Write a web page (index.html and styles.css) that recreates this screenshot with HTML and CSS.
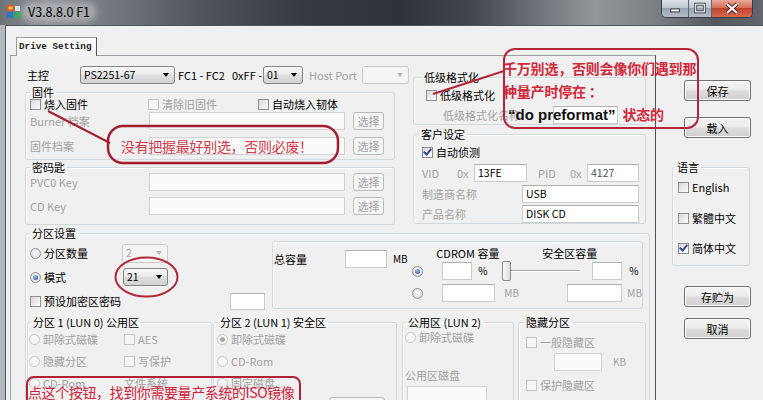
FILE: index.html
```html
<!DOCTYPE html>
<html lang="zh-CN">
<head>
  <meta charset="UTF-8">
  <title>V3.8.8.0 F1</title>
  <link rel="stylesheet" href="styles.css">
</head>
<body>
  <header class="win-top">
    <svg class="app-icon" viewBox="0 0 14 13">
      <rect x="0" y="0" width="7" height="6" fill="#e0572a"/>
      <rect x="1.5" y="1.5" width="4" height="3" fill="#f5c040"/>
      <rect x="8" y="1" width="5" height="5" fill="#d9dee5"/>
      <rect x="0" y="7" width="6" height="6" fill="#2d78cf"/>
      <rect x="7" y="7" width="7" height="6" fill="#3aa35a"/>
    </svg>
    <span class="title">V3.8.8.0 F1</span>
    <div class="caption">
      <span class="cap-btn cap-min"><svg viewBox="0 0 27 17"><rect x="9" y="9" width="9" height="3" fill="#fff" stroke="#33383f" stroke-width="1"/></svg></span>
      <span class="cap-btn cap-max"><svg viewBox="0 0 23 17"><rect x="7" y="4" width="9" height="8" fill="none" stroke="#33383f" stroke-width="3"/><rect x="7" y="4" width="9" height="8" fill="none" stroke="#fff" stroke-width="1.2"/></svg></span>
      <span class="cap-btn cap-close"><svg viewBox="0 0 40 17"><path d="M15 4 L25 13 M25 4 L15 13" stroke="#5a1a12" stroke-width="4"/><path d="M15 4 L25 13 M25 4 L15 13" stroke="#fff" stroke-width="2.2"/></svg></span>
    </div>
  </header>

  <div class="frame">
    <div class="client">
      <div class="tabs">
        <div class="tab-strip"><span class="tab">Drive Setting</span></div>
        <div class="tab-page">
          <div class="upper">
            <div class="upper-left">
              <div class="row main-row">
                <span class="w-main">主控</span>
                <span class="combo c-ctrl">PS2251-67<i></i></span>
                <span class="w-fc">FC1 - FC2</span>
                <span class="w-ff">0xFF -</span>
                <span class="combo c-01">01<i></i></span>
                <span class="dis w-hp">Host Port</span>
                <span class="combo dis c-hp"><i></i></span>
              </div>

              <fieldset class="grp g-fw">
                <legend>固件</legend>
                <div class="row fw-checks">
                  <span class="chk w-chk1"><i class="cb"></i>烧入固件</span>
                  <span class="chk dis w-chk2"><i class="cb"></i>清除旧固件</span>
                  <span class="chk"><i class="cb"></i>自动烧入韧体</span>
                </div>
                <div class="row fw-r1">
                  <span class="dis w-fld">Burner 档案</span>
                  <span class="fld dis f-path"></span>
                  <span class="btn dis b-sel">选择</span>
                </div>
                <div class="row fw-r2">
                  <span class="dis w-fld">固件档案</span>
                  <span class="fld dis f-path"></span>
                  <span class="btn dis b-sel">选择</span>
                </div>
              </fieldset>

              <fieldset class="grp g-key">
                <legend>密码匙</legend>
                <div class="row key-r1">
                  <span class="dis w-fld">PVC0 Key</span>
                  <span class="fld dis f-path"></span>
                  <span class="btn dis b-sel">选择</span>
                </div>
                <div class="row key-r2">
                  <span class="dis w-fld">CD Key</span>
                  <span class="fld dis f-path"></span>
                  <span class="btn dis b-sel">选择</span>
                </div>
              </fieldset>
            </div>

            <div class="upper-right">
              <fieldset class="grp g-low">
                <legend>低级格式化</legend>
                <div class="row low-r1"><span class="chk"><i class="cb"></i>低级格式化</span></div>
                <div class="row low-r2">
                  <span class="dis w-lowname">低级格式化名称</span>
                  <span class="fld f-low"></span>
                </div>
              </fieldset>

              <fieldset class="grp g-cust">
                <legend>客户设定</legend>
                <div class="row cust-r1"><span class="chk"><i class="cb on"></i>自动侦测</span></div>
                <div class="row cust-r2">
                  <span class="dis w-vid">VID</span>
                  <span class="dis w-0x">0x</span>
                  <span class="fld f-vid">13FE</span>
                  <span class="dis w-pid">PID</span>
                  <span class="dis w-0x">0x</span>
                  <span class="fld f-pid">4127</span>
                </div>
                <div class="row cust-r3">
                  <span class="dis w-name">制造商名称</span>
                  <span class="fld f-name">USB</span>
                </div>
                <div class="row cust-r4">
                  <span class="dis w-name">产品名称</span>
                  <span class="fld f-name">DISK CD</span>
                </div>
              </fieldset>
            </div>
          </div>

          <fieldset class="grp g-part">
            <legend>分区设置</legend>
            <div class="part-top">
              <div class="part-ctl">
                <div class="prow">
                  <span class="opt w-opt"><i class="rb"></i>分区数量</span>
                  <span class="combo dis c-num">2<i></i></span>
                </div>
                <div class="prow">
                  <span class="opt w-opt"><i class="rb on"></i>模式</span>
                  <span class="combo c-mode">21<i></i></span>
                </div>
                <div class="prow">
                  <span class="chk w-pre"><i class="cb"></i>预设加密区密码</span>
                  <span class="fld f-pre"></span>
                </div>
              </div>

              <div class="cap-box">
                <div class="cap-total">
                  <span class="w-total">总容量</span>
                  <span class="fld f-total"></span>
                  <span class="u-total">MB</span>
                </div>
                <div class="cap-grid">
                  <div class="cap-head"><span class="h-cd">CDROM 容量</span><span>安全区容量</span></div>
                  <div class="cap-row">
                    <i class="rb on"></i>
                    <span class="fld f-pct1"></span>
                    <span class="u-pct1">%</span>
                    <span class="slider"><b class="thumb"></b><span class="track"></span></span>
                    <span class="fld f-pct2"></span>
                    <span class="u-pct2">%</span>
                  </div>
                  <div class="cap-row cap-row2">
                    <i class="rb"></i>
                    <span class="fld f-mb1"></span>
                    <span class="dis u-mb1">MB</span>
                    <span class="fld f-mb2"></span>
                    <span class="dis u-mb2">MB</span>
                  </div>
                </div>
              </div>
            </div>

            <div class="part-sub">
              <fieldset class="grp sub g-lun0">
                <legend>分区 1 (LUN 0) 公用区</legend>
                <div class="srow">
                  <span class="opt dis w-l0"><i class="rb"></i>卸除式磁碟</span>
                  <span class="chk dis"><i class="cb"></i>AES</span>
                </div>
                <div class="srow">
                  <span class="opt dis w-l0"><i class="rb"></i>隐藏分区</span>
                  <span class="chk dis"><i class="cb"></i>写保护</span>
                </div>
                <div class="srow">
                  <span class="opt dis w-l0"><i class="rb"></i>CD-Rom</span>
                  <span class="dis">文件系统</span>
                </div>
              </fieldset>

              <fieldset class="grp sub g-lun1">
                <legend>分区 2 (LUN 1) 安全区</legend>
                <div class="srow"><span class="opt dis"><i class="rb on"></i>卸除式磁碟</span></div>
                <div class="srow"><span class="opt dis"><i class="rb"></i>CD-Rom</span></div>
                <div class="srow"><span class="opt dis"><i class="rb"></i>固定磁盘</span></div>
                <span class="btn dis b-iso"></span>
              </fieldset>

              <fieldset class="grp sub g-lun2">
                <legend>公用区 (LUN 2)</legend>
                <div class="srow lun2-r1"><span class="opt dis"><i class="rb"></i>卸除式磁碟</span></div>
                <div class="dis lun2-lbl">公用区磁盘</div>
                <span class="fld dis f-pub"></span>
              </fieldset>

              <fieldset class="grp sub g-hide">
                <legend>隐藏分区</legend>
                <div class="row hide-r1"><span class="chk dis"><i class="cb"></i>一般隐藏区</span></div>
                <div class="row hide-r2"><span class="fld dis f-kb"></span><span class="dis u-kb">KB</span></div>
                <div class="row hide-r3"><span class="chk dis"><i class="cb"></i>保护隐藏区</span></div>
              </fieldset>
            </div>
          </fieldset>
        </div>
      </div>

      <div class="side">
        <span class="btn b-side b-save">保存</span>
        <span class="btn b-side b-load">载入</span>
        <fieldset class="grp g-lang">
          <legend>语言</legend>
          <span class="chk lang-1"><i class="cb"></i>English</span>
          <span class="chk lang-2"><i class="cb"></i>繁體中文</span>
          <span class="chk lang-3"><i class="cb on"></i>简体中文</span>
        </fieldset>
        <span class="btn b-side b-saveas">存贮为</span>
        <span class="btn b-side b-cancel">取消</span>
      </div>
    </div>
  </div>

  <!-- red hand-drawn notes on top of the dialog -->
  <div class="notes">
    <svg class="marks" width="763" height="400" viewBox="0 0 763 400">
      <rect x="504" y="49" width="194" height="79" rx="11" fill="none" stroke="#b3263a" stroke-width="2"/>
      <line x1="504" y1="71" x2="433" y2="94" stroke="#b3263a" stroke-width="2"/>
      <rect x="108" y="126" width="230" height="37" rx="15" fill="none" stroke="#a31f30" stroke-width="2.5"/>
      <line x1="48" y1="111" x2="110" y2="143" stroke="#a31f30" stroke-width="2"/>
      <ellipse cx="146.5" cy="277" rx="31" ry="19.5" fill="none" stroke="#b02a3a" stroke-width="2"/>
      <rect x="27" y="377" width="273" height="40" rx="7" fill="none" stroke="#b12234" stroke-width="2"/>
    </svg>
    <div class="note note-a">
      <div>千万别选，否则会像你们遇到那</div>
      <div>种量产时停在 ：</div>
      <div class="note-a3"><span class="q">“do preformat”</span>状态的</div>
    </div>
    <div class="note note-b">没有把握最好别选，否则必废！</div>
    <div class="note note-d">点这个按钮，找到你需要量产系统的ISO镜像</div>
  </div>
</body>
</html>
```

FILE: styles.css
```css
* {
  margin: 0;
  padding: 0;
  box-sizing: border-box;
}
body {
  width: 763px;
  height: 400px;
  overflow: hidden;
  position: relative;
  font-family: "Noto Sans CJK SC", "Liberation Sans", sans-serif;
  font-size: 11px;
  line-height: 12px;
  color: #000;
  background-color: #b4b8bd;
}
span, i, b {
  flex-shrink: 0;
  white-space: nowrap;
}

/* title bar */
.win-top {
  height: 25px;
  display: flex;
  align-items: flex-start;
  background: #40454c linear-gradient(90deg, #6e7379 0%, #8b8f94 6%, #767a80 14%, #50555c 26%, #353a41 40%, #2e333a 52%, #42474e 62%, #6d7177 70%, #93969a 78%, #7b7f84 86%, #52575d 94%, #62676d 100%);
}
.app-icon {
  width: 14px;
  height: 13px;
  margin: 5px 0 0 7px;
}
.title {
  margin: 5px 0 0 3px;
  padding: 0 4px;
  font-size: 12.5px;
  line-height: 14px;
  border-radius: 7px;
  background: rgba(255, 255, 255, 0.3);
  box-shadow: 0 0 6px 3px rgba(255, 255, 255, 0.3);
}
.caption {
  margin-left: auto;
  margin-right: 10px;
  height: 18px;
  display: flex;
  border: 1px solid #3a3e44;
  border-top: none;
  border-radius: 0 0 5px 5px;
  overflow: hidden;
}
.cap-btn {
  height: 17px;
  display: block;
}
.cap-btn svg {
  display: block;
  width: 100%;
  height: 100%;
}
.cap-min, .cap-max {
  background: linear-gradient(#dfe3e8 0%, #bfc6ce 45%, #9ba5b0 50%, #b3bdc7 100%);
  border-right: 1px solid #5d646c;
}
.cap-min { width: 27px; }
.cap-max { width: 23px; }
.cap-close {
  width: 40px;
  background: linear-gradient(#eaa898 0%, #d4705a 45%, #c2432c 50%, #d66b4f 100%);
}

/* window body */
.frame {
  display: flex;
  height: 375px;
  padding-left: 5px;
}
.client {
  flex: 1;
  display: flex;
  background: #f0f0f0;
  border-left: 1px solid #50555b;
  border-top: 1px solid #50555b;
}
.tabs {
  width: 650px;
  padding-top: 11px;
}
.tab-strip {
  height: 18px;
  display: flex;
  padding-left: 10px;
}
.tab {
  width: 81px;
  height: 19px;
  padding-left: 2px;
  border: 1px solid #9a9da2;
  border-right-color: #55585c;
  border-bottom: none;
  background: linear-gradient(#ffffff, #f2f2f2);
  font-family: "Liberation Mono", monospace;
  font-weight: bold;
  font-size: 9.3px;
  line-height: 17px;
  color: #222;
  position: relative;
  z-index: 1;
}
.tab-page {
  margin-left: 4px;
  height: 346px;
  border: 1px solid #9a9da2;
  border-right-color: #50535a;
  background: #f0f0f0;
}

.row, .prow, .srow, .cap-row {
  display: flex;
  align-items: center;
}
.dis { color: #a2a2a2; }

/* checkbox / radio */
.chk, .opt {
  display: flex;
  align-items: center;
}
.cb, .rb {
  width: 11px;
  height: 11px;
  margin-right: 3px;
  border: 1px solid #8e8f8f;
  background: linear-gradient(135deg, #d9d9d9, #fbfbfb);
  display: flex;
  align-items: center;
  justify-content: center;
}
.rb {
  border-radius: 50%;
  background: radial-gradient(circle at 50% 40%, #ffffff, #d3d3d3);
}
.dis .cb, .dis .rb {
  border-color: #c6c6c6;
  background: #f6f6f6;
}
.cb.on::after {
  content: "";
  width: 3px;
  height: 6px;
  margin-top: -2px;
  border: solid #2f4f88;
  border-width: 0 2px 2px 0;
  transform: rotate(40deg);
}
.rb.on::after {
  content: "";
  width: 5px;
  height: 5px;
  border-radius: 50%;
  background: radial-gradient(circle at 40% 35%, #9cc3ec, #1d4a8e);
}
.dis .rb.on::after {
  background: #ababab;
}

/* inputs */
.combo {
  height: 18px;
  display: flex;
  align-items: center;
  padding: 0 5px 0 3px;
  border: 1px solid #858585;
  border-radius: 3px;
  background: linear-gradient(#f7f7f7 0%, #ececec 45%, #dedede 50%, #d2d2d2 100%);
  font-size: 10.5px;
}
.combo i {
  margin-left: auto;
  border-left: 3.5px solid transparent;
  border-right: 3.5px solid transparent;
  border-top: 4px solid #000;
}
.combo.dis {
  background: #f4f4f4;
  border-color: #cbcbcb;
}
.combo.dis i { border-top-color: #b5b5b5; }
.fld {
  height: 18px;
  padding-left: 3px;
  border: 1px solid #c8cbd0;
  border-top-color: #aeb1b6;
  background: #fff;
  font-size: 10.5px;
  line-height: 16px;
}
.fld.dis {
  background: #fafafa;
  border-color: #d3d3d3;
}
.btn {
  display: flex;
  align-items: center;
  justify-content: center;
  border: 1px solid #707070;
  border-radius: 3px;
  background: linear-gradient(#f3f3f3 0%, #ebebeb 47%, #dddddd 52%, #cfcfcf 100%);
  box-shadow: inset 0 0 0 1px #fbfbfb;
}
.btn.dis {
  border-color: #b8bcbf;
  background: #f4f4f4;
  box-shadow: none;
  color: #a2a2a2;
}

/* group boxes */
.grp {
  border: 1px solid #d0d9de;
  border-radius: 3px;
  box-shadow: inset 1px 1px 0 #fff;
}
.grp legend {
  padding: 0 2px;
  font-size: 11px;
  line-height: 11px;
}

/* upper area */
.upper {
  display: flex;
  padding-left: 14px;
}
.upper-left { width: 388px; }
.upper-right {
  width: 233px;
  margin-top: 16px;
}
.main-row {
  margin-top: 10px;
  height: 18px;
}
.w-main { width: 53px; margin-left: 2px; }
.c-ctrl { width: 95px; }
.w-fc { width: 54px; margin-left: 3px; }
.w-ff { width: 31px; }
.c-01 { width: 40px; }
.w-hp { width: 53px; margin-left: 6px; }
.c-hp { width: 47px; }

.g-fw {
  width: 370px;
  margin-top: 3px;
  padding: 0 0 4px 4px;
}
.fw-checks { height: 12px; }
.w-chk1 { width: 118px; }
.w-chk2 { width: 110px; }
.fw-r1 { margin-top: 2px; }
.fw-r2 { margin-top: 7px; }
.w-fld { width: 119px; }
.f-path { width: 196px; }
.b-sel {
  width: 31px;
  height: 18px;
  margin-left: 8px;
}
.g-key {
  width: 370px;
  margin-top: 2px;
  padding: 0 0 9px 4px;
}
.key-r2 { margin-top: 6px; }

.g-low {
  padding-left: 8px;
}
.low-r1 {
  height: 12px;
  margin-top: 6px;
  padding-left: 4px;
}
.low-r2 {
  height: 18px;
  margin-top: 5px;
}
.w-lowname { width: 110px; margin-left: 21px; }
.f-low { width: 65px; }

.g-cust {
  margin-top: 4px;
  padding-left: 8px;
}
.g-cust legend { margin-left: -3px; }
.cust-r1 { height: 12px; margin-top: 6px; }
.cust-r2 { margin-top: 6px; }
.cust-r3 { margin-top: 3px; }
.cust-r4 { margin-top: 2px; }
.w-vid { width: 35px; }
.w-0x { width: 17px; }
.f-vid { width: 53px; }
.w-pid { width: 32px; margin-left: 11px; }
.f-pid { width: 52px; color: #555; }
.w-name { width: 100px; }
.f-name { width: 117px; }

/* partition settings */
.g-part {
  width: 625px;
  margin: 3px 0 0 14px;
  height: 200px;
}
.g-part > legend { margin-left: 4px; }
.part-top {
  display: flex;
  margin-top: 2px;
  height: 72px;
}
.part-ctl {
  width: 246px;
  padding-left: 4px;
}
.prow { height: 24px; }
.w-opt { width: 92px; }
.c-num { width: 46px; height: 19px; }
.c-mode { width: 45px; margin-left: 1px; }
.w-pre { width: 200px; }
.f-pre { width: 35px; height: 17px; }

.cap-box {
  width: 371px;
  height: 68px;
  display: flex;
  border: 1px solid #d0d9de;
  border-radius: 3px;
  box-shadow: inset 1px 1px 0 #fff;
}
.cap-total {
  width: 140px;
  height: 18px;
  margin-top: 8px;
  padding-left: 1px;
  display: flex;
  align-items: center;
}
.w-total { width: 71px; }
.f-total { width: 42px; }
.u-total { margin-left: 6px; font-size: 10px; }
.cap-head {
  height: 14px;
  margin-top: 4px;
  padding-left: 24px;
  display: flex;
  align-items: center;
}
.h-cd { width: 106px; }
.cap-row {
  height: 18px;
  margin-top: 2px;
}
.cap-row2 { margin-top: 4px; }
.f-pct1 { width: 30px; margin-left: 16px; }
.u-pct1 { width: 10px; margin-left: 6px; font-size: 10px; }
.slider {
  width: 78px;
  height: 18px;
  margin-left: 14px;
  display: flex;
  align-items: center;
}
.thumb {
  width: 9px;
  height: 20px;
  border: 1px solid #8a8a8a;
  border-radius: 2px;
  background: linear-gradient(90deg, #fafafa, #dcdcdc);
}
.track {
  flex: 1;
  height: 2px;
  border-top: 1px solid #a9a9a9;
  border-bottom: 1px solid #fff;
}
.f-pct2 { width: 30px; margin-left: 12px; }
.u-pct2 { margin-left: 7px; font-size: 10px; }
.f-mb1 { width: 53px; margin-left: 16px; }
.u-mb1 { width: 14px; margin-left: 9px; font-size: 10px; }
.f-mb2 { width: 55px; margin-left: 49px; }
.u-mb2 { margin-left: 5px; font-size: 10px; }

.part-sub {
  display: flex;
  margin-top: 4px;
}
.sub { height: 100px; }
.srow { height: 22px; }
.g-lun0 {
  width: 185px;
  margin-left: 1px;
  padding-left: 1px;
}
.g-lun0 legend { margin-left: 2px; }
.w-l0 { width: 95px; }
.g-lun1 {
  width: 184px;
  margin-left: 1px;
  padding-left: 3px;
}
.g-lun1 legend { margin-left: 1px; }
.b-iso {
  width: 56px;
  height: 20px;
  margin: 3px 0 0 112px;
}
.g-lun2 {
  width: 112px;
  margin-left: 5px;
  padding-left: 2px;
}
.g-lun2 legend { margin-left: 1px; }
.lun2-r1 { height: 18px; }
.lun2-lbl {
  height: 14px;
  margin-top: 22px;
  line-height: 14px;
}
.f-pub {
  display: block;
  width: 80px;
  height: 20px;
  margin: 4px 0 0 2px;
}
.g-hide {
  width: 128px;
  margin-left: 4px;
  padding-left: 7px;
}
.g-hide legend { margin-left: -2px; }
.hide-r1 { height: 12px; margin-top: 8px; }
.hide-r2 { height: 18px; margin-top: 5px; }
.f-kb { width: 48px; margin-left: 28px; }
.u-kb { margin-left: 11px; font-size: 10px; }
.hide-r3 { height: 12px; margin-top: 8px; }

/* right column */
.side {
  flex: 1;
  display: flex;
  flex-direction: column;
  align-items: flex-start;
}
.b-side {
  width: 67px;
  height: 21px;
  margin-left: 28px;
}
.b-save { margin-top: 54px; }
.b-load { margin-top: 16px; }
.g-lang {
  width: 78px;
  margin: 24px 0 0 16px;
  padding: 0 0 11px 5px;
  display: flex;
  flex-direction: column;
}
.g-lang legend { margin-left: -3px; }
.g-lang .chk { height: 12px; }
.lang-1 { margin-top: 8px; }
.lang-2 { margin-top: 19px; }
.lang-3 { margin-top: 18px; }
.b-saveas { margin-top: 20px; }
.b-cancel { margin-top: 11px; }

/* red notes */
.notes {
  position: absolute;
  left: 0;
  top: 0;
  width: 763px;
  height: 400px;
  pointer-events: none;
}
.marks {
  position: absolute;
  left: 0;
  top: 0;
}
.note {
  position: absolute;
  white-space: nowrap;
  color: #d2283b;
  font-size: 14px;
}
.note-a {
  left: 503px;
  top: 57px;
  line-height: 23px;
  font-weight: bold;
  letter-spacing: -0.2px;
}
.note-a3 { padding-left: 5px; }
.q {
  margin-right: 7px;
  color: #111;
  font-family: "Liberation Sans", "Noto Sans CJK SC", sans-serif;
  font-size: 15px;
  letter-spacing: 0;
}
.note-b {
  left: 121px;
  top: 139px;
  line-height: 14px;
  color: #d33848;
  letter-spacing: -0.3px;
}
.note-d {
  left: 28px;
  top: 385px;
  line-height: 15px;
  color: #d2233a;
  letter-spacing: -0.4px;
}
```
